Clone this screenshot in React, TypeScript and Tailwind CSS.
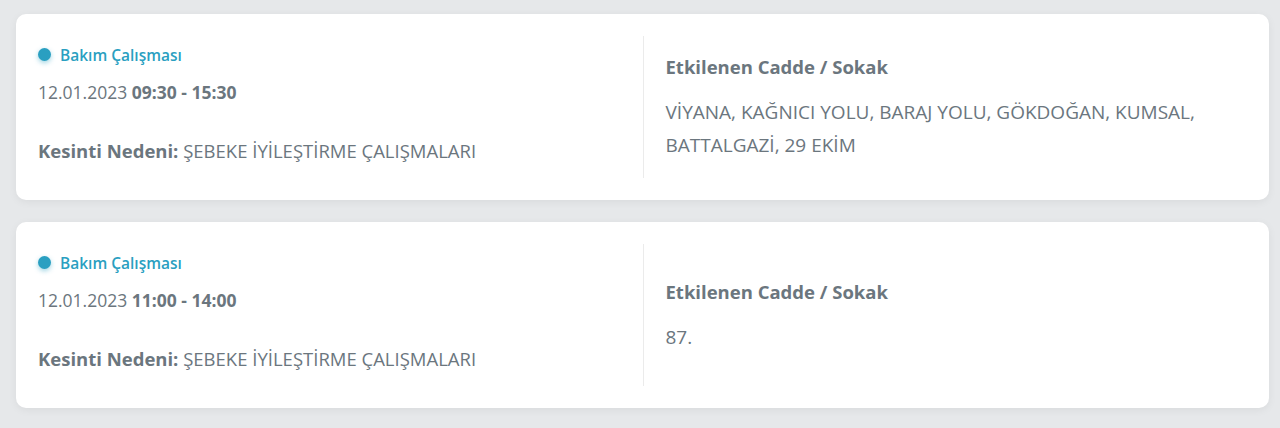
import React from "react";

const items = [
  {
    start: "09:30",
    end: "15:30",
    streets: "VİYANA, KAĞNICI YOLU, BARAJ YOLU, GÖKDOĞAN, KUMSAL, BATTALGAZİ, 29 EKİM",
  },
  { start: "11:00", end: "14:00", streets: "87." },
];

export default function App() {
  return (
    <div
      className="min-h-[428px] bg-[#e6e8ea] pl-4 pr-[11px] pt-[14px] text-[#6b767e]"
      style={{ fontFamily: '"Open Sans", "Noto Sans", sans-serif' }}
    >
      <div className="flex flex-col gap-[22px]">
        {items.map((it, i) => (
          <div
            key={i}
            className="rounded-[10px] bg-white px-[22px] py-[22px] shadow-[0_2px_8px_rgba(0,0,0,0.06)]"
          >
            <div className="grid h-[142px] grid-cols-2">
              <div className="flex flex-col justify-center pb-[7px]">
                <div className="flex items-center gap-[9px]">
                  <span className="h-[13px] w-[13px] rounded-full bg-[#2a9fc1] shadow-[0_2px_5px_rgba(42,159,193,0.45)]" />
                  <span className="text-[15.5px] font-semibold leading-[20px] text-[#2a9fc1]">Bakım Çalışması</span>
                </div>
                <div className="mt-[15px] text-[17.5px] leading-[24px]">
                  12.01.2023 <span className="font-bold">{it.start} - {it.end}</span>
                </div>
                <div className="mt-[35px] text-[18.5px] leading-[24px]">
                  <span className="font-bold">Kesinti Nedeni:</span> ŞEBEKE İYİLEŞTİRME ÇALIŞMALARI
                </div>
              </div>
              <div className="flex flex-col justify-center border-l border-[#ebebeb] pl-[22px] pr-6 pt-[3px]">
                <div className="text-[18.5px] font-bold leading-[24px]">Etkilenen Cadde / Sokak</div>
                <div className="mt-[17px] text-[19px] leading-[33px]">{it.streets}</div>
              </div>
            </div>
          </div>
        ))}
      </div>
    </div>
  );
}
